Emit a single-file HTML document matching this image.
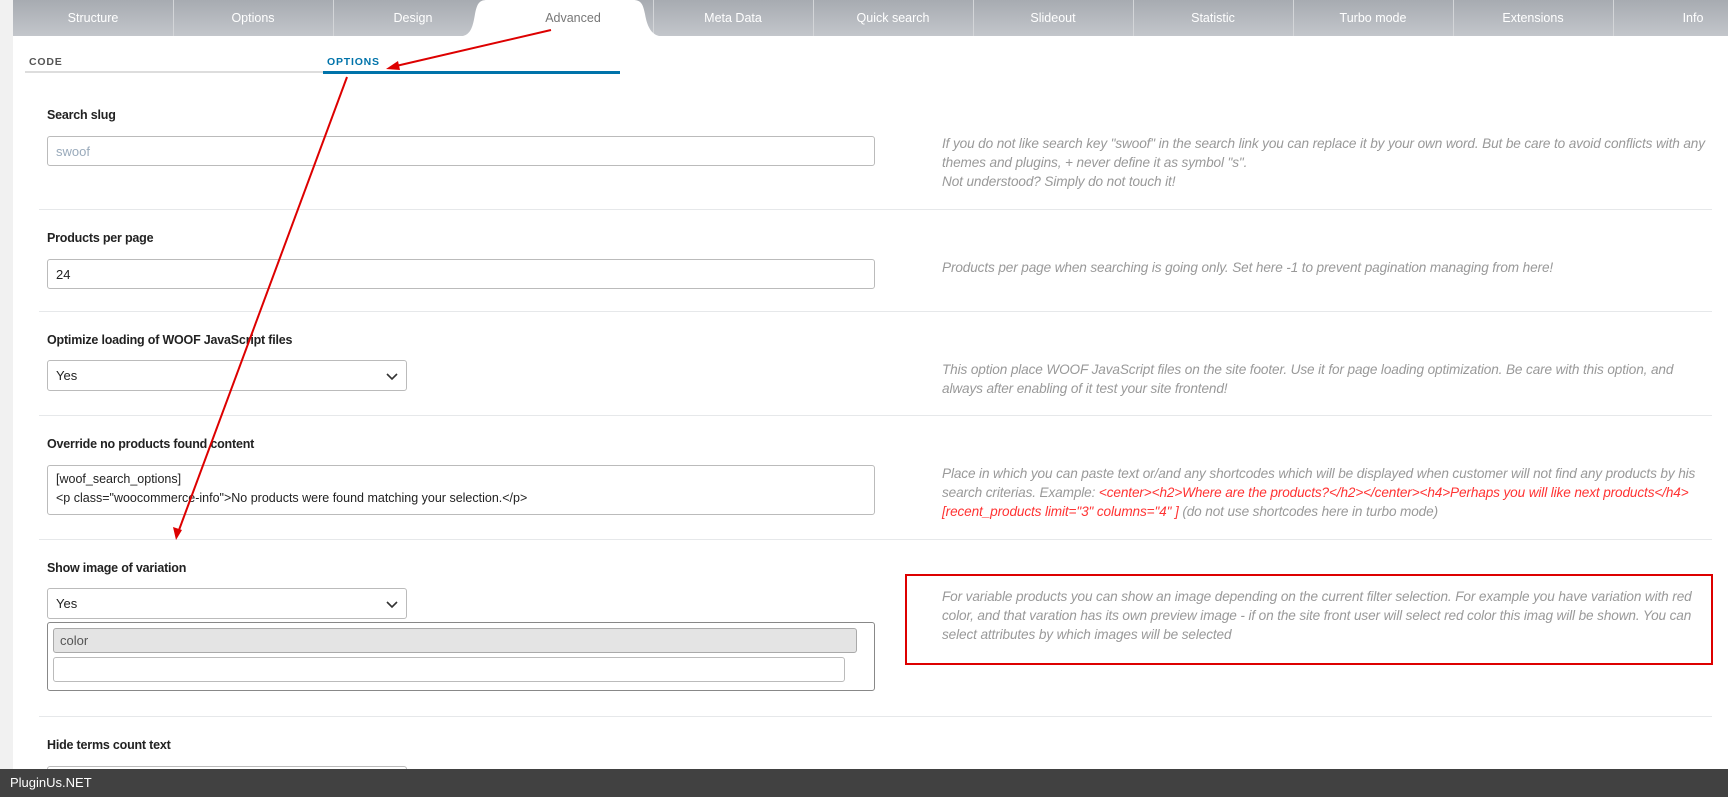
<!DOCTYPE html>
<html><head><meta charset="utf-8"><style>
*{box-sizing:border-box;margin:0;padding:0}
body{width:1728px;height:797px;overflow:hidden;background:#fff;font-family:"Liberation Sans",sans-serif;position:relative}
.strip{position:absolute;left:0;top:0;width:13px;height:797px;background:#f1f1f1}
.tab{position:absolute;top:0;height:36px;line-height:36px;text-align:center;color:#fff;font-size:12.5px;width:160px}
.sub{position:absolute;top:56px;font-size:10.5px;font-weight:bold;letter-spacing:.8px}
.lbl{position:absolute;left:47px;font-size:12.5px;color:#222;font-weight:bold;letter-spacing:-.2px}
.inp{position:absolute;border:1px solid #bbb;border-radius:3px;background:#fff;font-size:13px;padding-left:8px;display:flex;align-items:center;color:#222}
.desc{position:absolute;left:942px;font-size:13.6px;font-style:italic;color:#999;line-height:19px;letter-spacing:-.12px;white-space:nowrap}
.sep{position:absolute;left:39px;width:1673px;height:1px;background:#e6e8ea}
.red{color:#f33}
.chev{position:absolute;right:8px;top:50%;margin-top:-6px}
</style></head><body>
<div class="strip"></div>
<svg width="1715" height="36" style="position:absolute;left:13px;top:0">
<defs><linearGradient id="g" x1="0" y1="0" x2="0" y2="1"><stop offset="0" stop-color="#a7abb1"/><stop offset="1" stop-color="#c3c6cb"/></linearGradient></defs>
<rect x="0" y="0" width="1715" height="36" fill="url(#g)"/>
<g stroke="#d3d5d8" stroke-width="1"><line x1="160.5" y1="0" x2="160.5" y2="36"/><line x1="320.5" y1="0" x2="320.5" y2="36"/><line x1="640.5" y1="0" x2="640.5" y2="36"/><line x1="800.5" y1="0" x2="800.5" y2="36"/><line x1="960.5" y1="0" x2="960.5" y2="36"/><line x1="1120.5" y1="0" x2="1120.5" y2="36"/><line x1="1280.5" y1="0" x2="1280.5" y2="36"/><line x1="1440.5" y1="0" x2="1440.5" y2="36"/><line x1="1600.5" y1="0" x2="1600.5" y2="36"/></g>
<path d="M450 36 C458 34 460 26 462 14 C464 4 466 0 474 0 L620 0 C628 0 630 4 632 14 C634 26 638 34 646 36 Z" fill="#fff"/>
</svg>
<div class="tab" style="left:13px">Structure</div>
<div class="tab" style="left:173px">Options</div>
<div class="tab" style="left:333px">Design</div>
<div class="tab" style="left:493px;color:#777">Advanced</div>
<div class="tab" style="left:653px">Meta Data</div>
<div class="tab" style="left:813px">Quick search</div>
<div class="tab" style="left:973px">Slideout</div>
<div class="tab" style="left:1133px">Statistic</div>
<div class="tab" style="left:1293px">Turbo mode</div>
<div class="tab" style="left:1453px">Extensions</div>
<div class="tab" style="left:1613px">Info</div>

<div class="sub" style="left:29px;color:#555">CODE</div>
<div class="sub" style="left:327px;color:#0073aa">OPTIONS</div>
<div style="position:absolute;left:25px;top:71px;width:298px;height:2px;background:#ddd"></div>
<div style="position:absolute;left:323px;top:71px;width:297px;height:3px;background:#0073aa"></div>

<div class="lbl" style="top:108px">Search slug</div>
<div class="inp" style="left:47px;top:136px;width:828px;height:30px;color:#9ab">swoof</div>
<div class="desc" style="top:134px">If you do not like search key "swoof" in the search link you can replace it by your own word. But be care to avoid conflicts with any<br>themes and plugins, + never define it as symbol "s".<br>Not understood? Simply do not touch it!</div>
<div class="sep" style="top:209px"></div>

<div class="lbl" style="top:231px">Products per page</div>
<div class="inp" style="left:47px;top:259px;width:828px;height:30px">24</div>
<div class="desc" style="top:258px">Products per page when searching is going only. Set here -1 to prevent pagination managing from here!</div>
<div class="sep" style="top:311px"></div>

<div class="lbl" style="top:333px">Optimize loading of WOOF JavaScript files</div>
<div class="inp" style="left:47px;top:360px;width:360px;height:31px">Yes<svg class="chev" width="12" height="12"><path d="M1 4 L6 9 L11 4" stroke="#333" stroke-width="1.6" fill="none"/></svg></div>
<div class="desc" style="top:360px">This option place WOOF JavaScript files on the site footer. Use it for page loading optimization. Be care with this option, and<br>always after enabling of it test your site frontend!</div>
<div class="sep" style="top:415px"></div>

<div class="lbl" style="top:437px">Override no products found content</div>
<div class="inp" style="left:47px;top:465px;width:828px;height:50px;padding-top:4px;line-height:19px;display:block;font-size:12.5px">[woof_search_options]<br>&lt;p class="woocommerce-info"&gt;No products were found matching your selection.&lt;/p&gt;</div>
<div class="desc" style="top:464px">Place in which you can paste text or/and any shortcodes which will be displayed when customer will not find any products by his<br>search criterias. Example: <span class="red">&lt;center&gt;&lt;h2&gt;Where are the products?&lt;/h2&gt;&lt;/center&gt;&lt;h4&gt;Perhaps you will like next products&lt;/h4&gt;</span><br><span class="red">[recent_products limit="3" columns="4" ]</span> (do not use shortcodes here in turbo mode)</div>
<div class="sep" style="top:539px"></div>

<div class="lbl" style="top:561px">Show image of variation</div>
<div class="inp" style="left:47px;top:588px;width:360px;height:31px">Yes<svg class="chev" width="12" height="12"><path d="M1 4 L6 9 L11 4" stroke="#333" stroke-width="1.6" fill="none"/></svg></div>
<div style="position:absolute;left:47px;top:622px;width:828px;height:69px;border:1px solid #888;border-radius:3px"></div>
<div class="inp" style="left:53px;top:628px;width:804px;height:25px;background:#e4e4e4;border-color:#aaa;color:#555;padding-left:6px">color</div>
<div class="inp" style="left:53px;top:657px;width:792px;height:25px"></div>
<div style="position:absolute;left:905px;top:574px;width:808px;height:91px;border:2px solid #d00"></div>
<div class="desc" style="top:587px">For variable products you can show an image depending on the current filter selection. For example you have variation with red<br>color, and that varation has its own preview image - if on the site front user will select red color this imag will be shown. You can<br>select attributes by which images will be selected</div>
<div class="sep" style="top:716px"></div>

<div class="lbl" style="top:738px">Hide terms count text</div>
<div class="inp" style="left:47px;top:766px;width:360px;height:31px"></div>

<div style="position:absolute;left:0;top:769px;width:1728px;height:28px;background:#414141;color:#fff;font-size:13px;line-height:28px;padding-left:10px">PluginUs.NET</div>

<svg width="1728" height="797" style="position:absolute;left:0;top:0;pointer-events:none">
<line x1="551" y1="30" x2="396" y2="66" stroke="#d00" stroke-width="2"/>
<path d="M386 69 L398 61 L400 70 Z" fill="#d00"/>
<line x1="347" y1="77" x2="179" y2="530" stroke="#d00" stroke-width="2"/>
<path d="M176 540 L173 527 L182 530 Z" fill="#d00"/>
</svg>
</body></html>
